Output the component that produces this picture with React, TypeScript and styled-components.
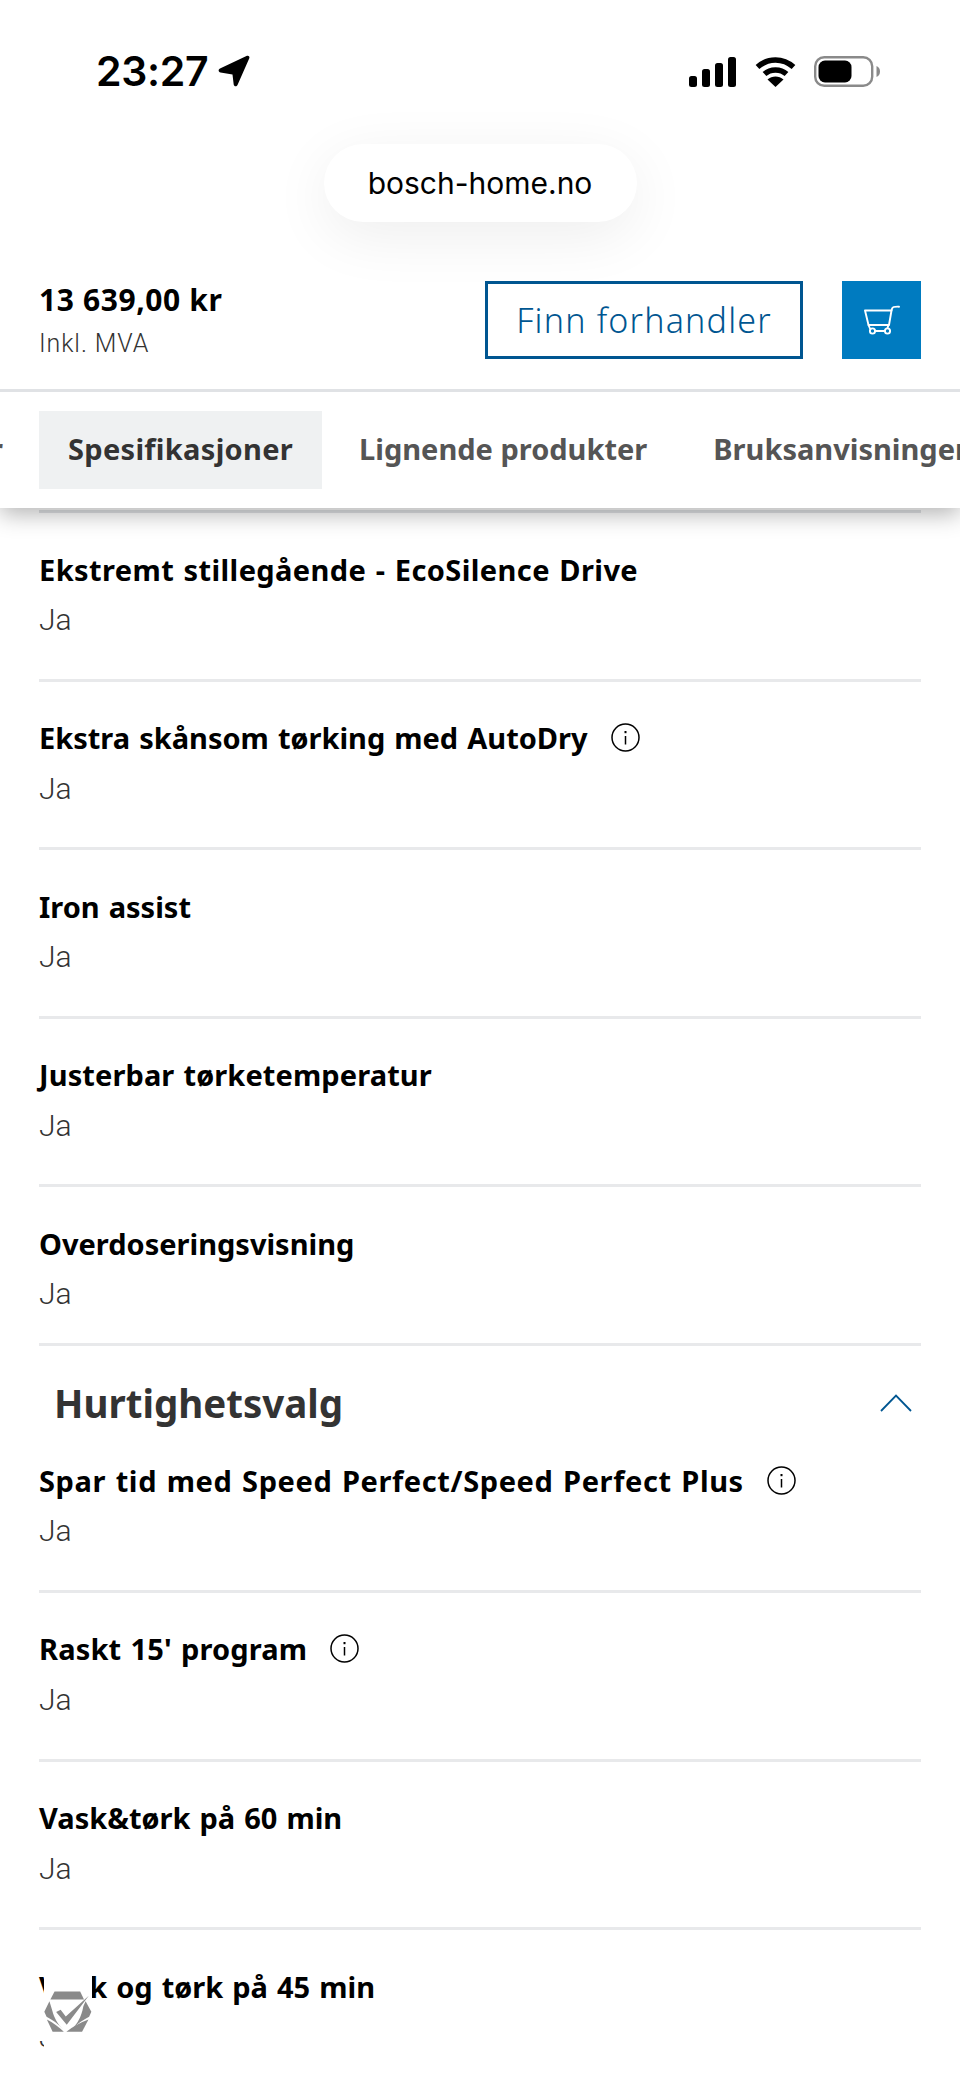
import React from 'react'
import styled, { createGlobalStyle } from 'styled-components'

const GlobalStyle = createGlobalStyle`
  html, body {
    margin: 0;
    padding: 0;
    background: #fff;
  }
  * {
    box-sizing: border-box;
  }
`

const Page = styled.div`
  position: relative;
  width: 960px;
  height: 2081px;
  overflow: hidden;
  background: #fff;
  color: #000;
  font-family: 'Noto Sans', Arial, sans-serif;
`

const StatusBar = styled.div`
  display: flex;
  justify-content: space-between;
  align-items: flex-start;
  height: 144px;
  padding: 49px 80px 0 96px;
`

const Clock = styled.div`
  display: flex;
  align-items: center;
  gap: 10px;
  font-family: Inter, sans-serif;
  font-size: 41px;
  font-weight: 600;
  line-height: 44px;
  letter-spacing: -0.3px;
`

const StatusIcons = styled.div`
  display: flex;
  align-items: center;
  gap: 18px;
  padding-top: 7px;
`

const UrlRow = styled.div`
  display: flex;
  justify-content: center;
  height: 137px;
`

const UrlPill = styled.div`
  display: flex;
  align-items: center;
  justify-content: center;
  width: 313px;
  height: 78px;
  border-radius: 39px;
  background: #fff;
  box-shadow: 0 14px 60px rgba(0, 0, 0, 0.07);
  font-family: Inter, sans-serif;
  font-size: 30px;
`

const PriceBar = styled.div`
  display: flex;
  align-items: flex-start;
  justify-content: space-between;
  height: 108px;
  padding: 0 39px;
`

const PriceBlock = styled.div`
  display: flex;
  flex-direction: column;
  gap: 9px;
`

const Price = styled.div`
  font-size: 30px;
  font-weight: 700;
  line-height: 38px;
  letter-spacing: 0.6px;
`

const PriceNote = styled.div`
  font-family: Roboto, sans-serif;
  font-size: 25px;
  font-weight: 300;
  line-height: 32px;
  letter-spacing: 0.9px;
  color: #333;
`

const Actions = styled.div`
  display: flex;
  gap: 39px;
`

const DealerButton = styled.button`
  width: 318px;
  height: 78px;
  border: 3px solid #005691;
  background: #fff;
  color: #005691;
  font-family: inherit;
  font-size: 34px;
  font-weight: 300;
  letter-spacing: 1.2px;
`

const CartButton = styled.button`
  display: flex;
  align-items: center;
  justify-content: center;
  width: 79px;
  height: 78px;
  border: 0;
  padding: 0;
  background: #007bc0;
`

const TabBar = styled.nav`
  position: relative;
  z-index: 2;
  display: flex;
  align-items: center;
  height: 119px;
  border-top: 3px solid #e0e2e5;
  background: #fff;
  overflow: hidden;
  box-shadow: 0 6px 22px rgba(0, 0, 0, 0.3);
  clip-path: inset(0 0 -40px 0);
`

const Tab = styled.div<{ $active?: boolean }>`
  flex: none;
  display: flex;
  align-items: center;
  height: 78px;
  padding: 0 29px 4px;
  margin-right: 8px;
  background: ${({ $active }) => ($active ? '#eff1f2' : 'transparent')};
  color: ${({ $active }) => ($active ? '#333' : '#555')};
  font-size: 29px;
  font-weight: 700;
  letter-spacing: ${({ $active }) => ($active ? '0.3px' : '0')};
`

// end of the previous tab, scrolled almost out of view
const ScrolledTab = styled(Tab)`
  justify-content: flex-end;
  width: 39px;
  margin-right: 0;
  padding: 0 36px 4px 0;
  overflow: hidden;
`

const Section = styled.div`
  padding: 0 39px;
`

// last row's line, half hidden below the tab bar's shadow
const TopRule = styled.div`
  height: 3px;
  margin-top: 2px;
  background: #e0e2e5;
`

const Row = styled.div<{ $last?: boolean }>`
  display: flex;
  flex-direction: column;
  height: ${({ $last }) => ($last ? '159px' : '168.6px')};
  padding-top: 37px;
  border-bottom: 3px solid #e8e9eb;
`

const RowTitle = styled.div<{ $track?: number }>`
  display: flex;
  align-items: center;
  gap: 23px;
  height: 38px;
  font-size: 29px;
  font-weight: 700;
  white-space: nowrap;
  word-spacing: 1.5px;
  letter-spacing: ${({ $track }) => $track ?? 0}px;
`

const RowValue = styled.div`
  margin-top: 13px;
  font-family: Roboto, sans-serif;
  font-size: 30px;
  font-weight: 300;
  line-height: 38px;
  color: #333;
`

const SectionHead = styled.div`
  display: flex;
  align-items: center;
  justify-content: space-between;
  height: 78px;
  padding: 36px 9px 0 15px;
`

const SectionTitle = styled.h2`
  margin: 0;
  font-size: 38.5px;
  font-weight: 700;
  color: #333;
`

const SealBadge = styled.div`
  position: absolute;
  left: 44px;
  top: 1976px;
  display: flex;
  justify-content: center;
  width: 48px;
  height: 105px;
  padding-top: 14px;
  background: #fff;
`

const InfoIcon = () => (
  <svg width="29" height="29" viewBox="0 0 29 29" fill="none" stroke="#000" strokeWidth="1.5">
    <circle cx="14.5" cy="14.5" r="13.5" />
    <path d="M14.5 13v8.5" />
    <path d="M14.5 8v2.2" strokeWidth="2" />
  </svg>
)

const SignalIcon = () => (
  <svg width="48" height="30" viewBox="0 0 48 30" fill="#000">
    <rect x="0" y="19" width="8" height="11" rx="2.5" />
    <rect x="13" y="12" width="8" height="18" rx="2.5" />
    <rect x="26" y="6" width="8" height="24" rx="2.5" />
    <rect x="39" y="0" width="8" height="30" rx="2.5" />
  </svg>
)

const WifiIcon = () => (
  <svg width="41" height="30" viewBox="0 0 41 30" fill="none" stroke="#000" strokeWidth="5.5">
    <path d="M2.5 10C13 .5 28 .5 38.5 10" />
    <path d="M9.5 17C15.5 11.5 25.5 11.5 31.5 17" />
    <path d="M12.5 22.5L20.5 30L28.5 22.5C24 18.5 17 18.5 12.5 22.5Z" fill="#000" stroke="none" />
  </svg>
)

const BatteryIcon = () => (
  <svg width="66" height="31" viewBox="0 0 66 31">
    <rect x="1.2" y="1.2" width="57" height="28.6" rx="9" fill="none" stroke="#8a8a8a" strokeWidth="2.4" />
    <rect x="4.5" y="4.5" width="33" height="22" rx="6.5" fill="#000" />
    <path d="M62.5 10v11c2.5-1 3.5-3 3.5-5.5s-1-4.5-3.5-5.5z" fill="#8a8a8a" />
  </svg>
)

const LocationIcon = () => (
  <svg width="32" height="32" viewBox="0 0 32 32" fill="#000">
    <path d="M29 .8C30.5.2 32 1.7 31.3 3.2L19.5 30C18.6 32 16 31.6 15.7 29.5L14.5 19.5 2.5 17.5C.3 17.1 0 14.5 2 13.6Z" />
  </svg>
)

const CartIcon = () => (
  <svg width="36" height="30" viewBox="0 0 36 30" fill="none" stroke="#fff" strokeWidth="1.9" strokeLinejoin="round" strokeLinecap="round">
    <path d="M1 5.5h26.5L25 20H4.5z" />
    <path d="M27.5 5.5L28.2 3.3C28.8 1.8 30 1.5 35 1.7" />
    <path d="M4.5 20l1.5 3.5" />
    <path d="M24.5 20l-1 3" />
    <path d="M11 26h10" />
    <circle cx="8.5" cy="26" r="2.6" />
    <circle cx="23.5" cy="26" r="2.6" />
  </svg>
)

const ChevronUp = () => (
  <svg width="32" height="18" viewBox="0 0 32 18" fill="none" stroke="#005691" strokeWidth="1.8">
    <path d="M1 17L16 1.5 31 17" />
  </svg>
)

// drawn in a 3x grid, so the points read straight off a zoomed crop
const SealIcon = () => (
  <svg width="50" height="45" viewBox="42 60 150 135" fill="#8a8a8a">
    <path d="M75 62H155L167 87H62Z" />
    <path d="M59 92L43 125 50 141C68 150 86 163 102 181 84 162 74 145 68 122Z" />
    <path d="M51 149L69 188H104C88 172 70 158 51 149Z" />
    <path d="M112 188H161L181 149C155 158 130 172 112 188Z" />
    <path d="M172 92L190 125 183 141C165 150 146 163 128 181 146 162 158 145 165 108Z" />
    <path d="M80 126L94 119 110 140 182 75 113 166Z" />
  </svg>
)

type Spec = { title: string; info?: boolean; last?: boolean; track?: number }

const FIRST_SPECS: Spec[] = [
  { title: 'Ekstremt stillegående - EcoSilence Drive', track: 0.4 },
  { title: 'Ekstra skånsom tørking med AutoDry', info: true },
  { title: 'Iron assist' },
  { title: 'Justerbar tørketemperatur', track: 0.1 },
  { title: 'Overdoseringsvisning', last: true },
]

const SPEED_SPECS: Spec[] = [
  { title: 'Spar tid med Speed Perfect/Speed Perfect Plus', info: true, track: 0.6 },
  { title: "Raskt 15' program", info: true, track: 0.15 },
  { title: 'Vask&tørk på 60 min' },
  { title: 'Vask og tørk på 45 min' },
]

const SpecRow = ({ title, info, last, track }: Spec) => (
  <Row $last={last}>
    <RowTitle $track={track}>
      {title}
      {info && <InfoIcon />}
    </RowTitle>
    <RowValue>Ja</RowValue>
  </Row>
)

export default function App() {
  return (
    <Page>
      <GlobalStyle />
      <StatusBar>
        <Clock>
          23:27
          <LocationIcon />
        </Clock>
        <StatusIcons>
          <SignalIcon />
          <WifiIcon />
          <BatteryIcon />
        </StatusIcons>
      </StatusBar>
      <UrlRow>
        <UrlPill>bosch-home.no</UrlPill>
      </UrlRow>
      <PriceBar>
        <PriceBlock>
          <Price>13 639,00 kr</Price>
          <PriceNote>Inkl. MVA</PriceNote>
        </PriceBlock>
        <Actions>
          <DealerButton>Finn forhandler</DealerButton>
          <CartButton>
            <CartIcon />
          </CartButton>
        </Actions>
      </PriceBar>
      <TabBar>
        <ScrolledTab>Fordeler</ScrolledTab>
        <Tab $active>Spesifikasjoner</Tab>
        <Tab>Lignende produkter</Tab>
        <Tab>Bruksanvisninger</Tab>
      </TabBar>
      <Section>
        <TopRule />
        {FIRST_SPECS.map((spec) => (
          <SpecRow key={spec.title} {...spec} />
        ))}
        <SectionHead>
          <SectionTitle>Hurtighetsvalg</SectionTitle>
          <ChevronUp />
        </SectionHead>
        {SPEED_SPECS.map((spec) => (
          <SpecRow key={spec.title} {...spec} />
        ))}
      </Section>
      <SealBadge>
        <SealIcon />
      </SealBadge>
    </Page>
  )
}
